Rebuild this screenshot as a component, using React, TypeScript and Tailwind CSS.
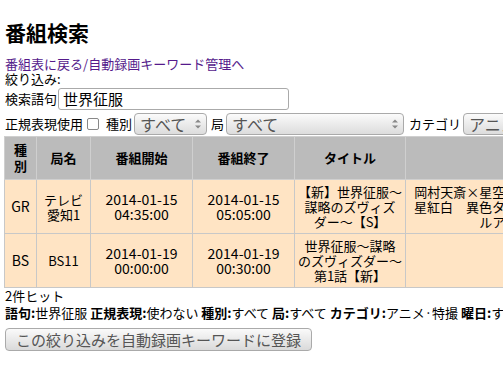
import React from "react";

const Arrows = () => (
  <svg
    className="absolute right-[6px] top-1/2 -translate-y-1/2"
    width="6"
    height="11"
    viewBox="0 0 6 11"
  >
    <path d="M0 4 L3 1 L6 4 Z" fill="#888" />
    <path d="M0 7 L3 10 L6 7 Z" fill="#888" />
  </svg>
);

const FakeSelect = ({ value, width }: { value: string; width: string }) => (
  <div className={`relative h-[22px] ${width}`}>
    <select
      defaultValue={value}
      className="appearance-none w-full h-full border border-[#aaa] rounded-[4px] bg-gradient-to-b from-[#fbfbfb] to-[#dcdcdc] pl-[5px] pr-[16px] text-[16px] leading-[20px] text-[#555]"
    >
      <option>{value}</option>
    </select>
    <Arrows />
  </div>
);

const rows = [
  {
    type: "GR",
    station: "テレビ愛知1",
    start: ["2014-01-15", "04:35:00"],
    end: ["2014-01-15", "05:05:00"],
    title: ["【新】世界征服～", "謀略のズヴィズ", "ダー～【S】"],
    desc: [
      "岡村天斎×星空めてお×キャラ原案・黒",
      "星紅白　異色タッグが贈る完全オリジナ",
      "ルアニメーション",
    ],
  },
  {
    type: "BS",
    station: "BS11",
    start: ["2014-01-19", "00:00:00"],
    end: ["2014-01-19", "00:30:00"],
    title: ["世界征服～謀略", "のズヴィズダー～", "第1話【新】"],
    desc: [],
  },
];

export default function App() {
  return (
    <div className="pl-[4px] pt-[19px] text-[13px] leading-[15px] text-black font-['Noto_Sans_CJK_JP',sans-serif] bg-white min-h-[375px]">
      <h1 className="text-[21px] font-bold leading-[26px] mb-[11px] pl-[1px]">
        番組検索
      </h1>
      <div className="text-[#551a8b] pl-[1px]">
        <a href="#">番組表に戻る</a>/<a href="#">自動録画キーワード管理へ</a>
      </div>
      <div className="pl-[1px]">絞り込み:</div>
      <div className="flex items-center h-[25px] pl-[1px]">
        <span>検索語句</span>
        <input
          defaultValue="世界征服"
          className="ml-[1px] w-[231px] h-[22px] border border-[#aaa] rounded-[3px] px-[4px] text-[15px] outline-none"
        />
      </div>
      <div className="flex items-center h-[25px] whitespace-nowrap pl-[1px]">
        <span>正規表現使用</span>
        <span className="ml-[4px] shrink-0 w-[12px] h-[12px] border border-[#888] rounded-[2px] bg-white" />
        <span className="ml-[7px]">種別</span>
        <div className="ml-[2px]">
          <FakeSelect value="すべて" width="w-[73px]" />
        </div>
        <span className="ml-[4px]">局</span>
        <div className="ml-[2px]">
          <FakeSelect value="すべて" width="w-[178px]" />
        </div>
        <span className="ml-[5px]">カテゴリ</span>
        <div className="ml-[2px]">
          <FakeSelect value="アニメ・特撮" width="w-[130px]" />
        </div>
      </div>
      <table className="table-fixed w-[652px] border-collapse">
        <thead>
          <tr className="bg-[#bbbbbb]">
            {[
              ["種別", "w-[32px]"],
              ["局名", "w-[54px]"],
              ["番組開始", "w-[102px]"],
              ["番組終了", "w-[102px]"],
              ["タイトル", "w-[111px]"],
              ["番組内容", "w-[251px]"],
            ].map(([h, w]) => (
              <th
                key={h}
                className={`${w} border border-[#cfcfcf] px-[5px] py-[5px] leading-[16px] font-bold text-center`}
              >
                {h}
              </th>
            ))}
          </tr>
        </thead>
        <tbody>
          {rows.map((r) => (
            <tr key={r.start[0] + r.type} className="bg-[#ffe4c4] h-[54px]">
              <td className="border border-[#c8c8c8] px-[4px] py-[4px] text-center text-[14px]">
                {r.type}
              </td>
              <td className="border border-[#c8c8c8] px-[6px] py-[4px] text-center">
                {r.station}
              </td>
              <td className="border border-[#c8c8c8] px-[4px] py-[4px] text-center text-[14px]">
                {r.start[0]}
                <br />
                {r.start[1]}
              </td>
              <td className="border border-[#c8c8c8] px-[4px] py-[4px] text-center text-[14px]">
                {r.end[0]}
                <br />
                {r.end[1]}
              </td>
              <td className="border border-[#c8c8c8] px-[2px] py-[4px] text-center whitespace-nowrap overflow-hidden">
                {r.title.map((t, i) => (
                  <div key={i}>{t}</div>
                ))}
              </td>
              <td className="border border-[#c8c8c8] px-[8px] py-[4px] text-center whitespace-nowrap">
                {r.desc.map((d, i) => (
                  <div key={i}>{d}</div>
                ))}
              </td>
            </tr>
          ))}
        </tbody>
      </table>
      <div className="pl-[1px]">2件ヒット</div>
      <div className="mt-[2px] whitespace-nowrap pl-[1px]">
        <b>語句:</b>世界征服 <b>正規表現:</b>使わない <b>種別:</b>すべて{" "}
        <b>局:</b>すべて <b>カテゴリ:</b>アニメ·特撮 <b>曜日:</b>すべて
      </div>
      <button className="mt-[8px] ml-[1px] h-[23px] px-[10px] border border-[#aaa] rounded-[4px] bg-gradient-to-b from-[#fafafa] to-[#dadada] text-[15px] leading-[20px] text-[#555]">
        この絞り込みを自動録画キーワードに登録
      </button>
    </div>
  );
}
